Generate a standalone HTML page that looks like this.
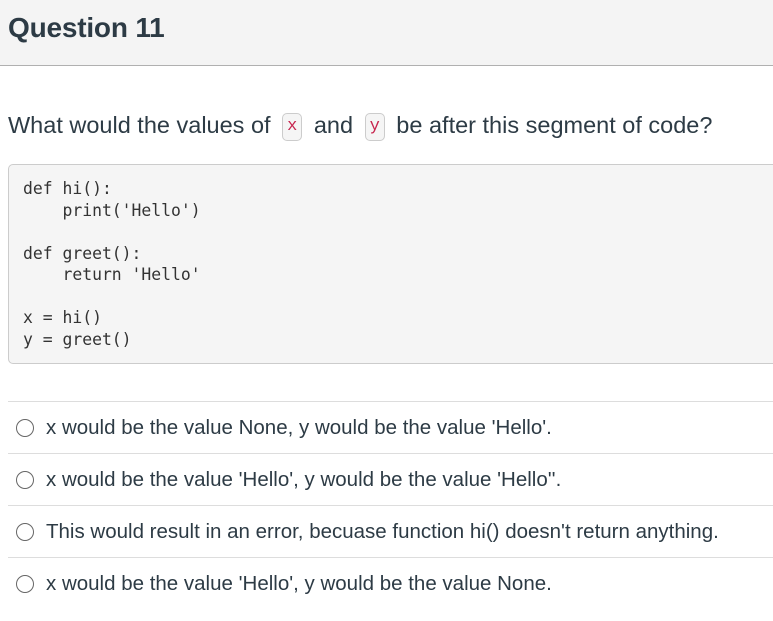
<!DOCTYPE html>
<html><head><style>
body{margin:0;width:773px;height:621px;background:#fff;font-family:"Liberation Sans",sans-serif;color:#2d3b45;position:relative;overflow:hidden}
.hdr{position:absolute;left:0;top:0;width:773px;height:65px;background:#f4f4f4;border-bottom:1px solid #b0b0b0}
.hdr span{position:absolute;left:8px;top:12px;font-size:28px;font-weight:bold;letter-spacing:-0.2px}
.q{position:absolute;left:8px;top:112px;font-size:23.5px;white-space:nowrap;letter-spacing:0}
.c{display:inline-block;font-family:"Liberation Mono",monospace;font-size:17px;color:#c7254e;background:#f5f5f5;border:1px solid #ccc;border-radius:5px;padding:0 4px;line-height:26px;vertical-align:middle;margin:0 5px}
pre{position:absolute;left:8px;top:164px;width:770px;height:200px;margin:0;background:#f5f5f5;border:1px solid #ccc;border-radius:5px;box-sizing:border-box;padding:13px 14px;font-family:"DejaVu Sans Mono",monospace;font-size:16.4px;line-height:21.5px;color:#333}
.o{position:absolute;left:8px;width:765px;border-top:1px solid #ddd;height:52px}
.o i{position:absolute;left:8px;top:17px;width:18px;height:18px;border:1.5px solid #666;border-radius:50%;box-sizing:border-box}
.o span{position:absolute;left:38px;top:14px;font-size:20.5px;white-space:nowrap;letter-spacing:0}
</style></head><body>
<div class="hdr"><span>Question 11</span></div>
<div class="q">What would the values of <span class="c">x</span> and <span class="c">y</span> be after this segment of code?</div>
<pre>def hi():
    print('Hello')

def greet():
    return 'Hello'

x = hi()
y = greet()</pre>
<div class="o" style="top:401px"><i></i><span>x would be the value None, y would be the value 'Hello'.</span></div>
<div class="o" style="top:453px"><i></i><span>x would be the value 'Hello', y would be the value 'Hello''.</span></div>
<div class="o" style="top:505px"><i></i><span>This would result in an error, becuase function hi() doesn't return anything.</span></div>
<div class="o" style="top:557px"><i></i><span>x would be the value 'Hello', y would be the value None.</span></div>
</body></html>
